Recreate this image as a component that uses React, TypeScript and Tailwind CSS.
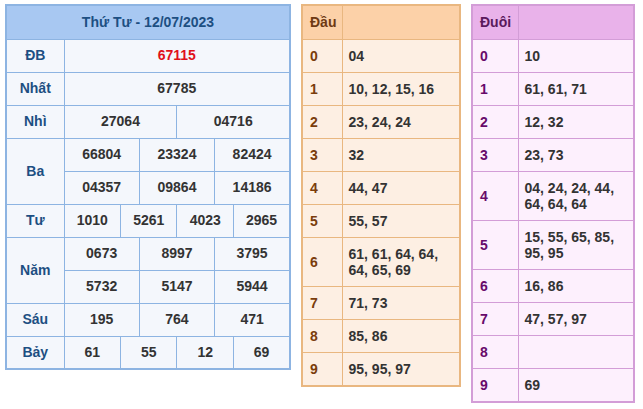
import React from "react";

const font = { fontFamily: '"Liberation Sans", Arial, sans-serif' };

function LeftTable() {
  const td = "border border-[#8db4e2] text-center text-[#333] px-1";
  const lb = "border border-[#8db4e2] text-center text-[#1d4f82]";
  const rows: { label: string; groups: string[][]; red?: boolean }[] = [
    { label: "ĐB", groups: [["67115"]], red: true },
    { label: "Nhất", groups: [["67785"]] },
    { label: "Nhì", groups: [["27064", "04716"]] },
    { label: "Ba", groups: [["66804", "23324", "82424"], ["04357", "09864", "14186"]] },
    { label: "Tư", groups: [["1010", "5261", "4023", "2965"]] },
    { label: "Năm", groups: [["0673", "8997", "3795"], ["5732", "5147", "5944"]] },
    { label: "Sáu", groups: [["195", "764", "471"]] },
    { label: "Bảy", groups: [["61", "55", "12", "69"]] },
  ];
  return (
    <table className="table-fixed border-collapse w-[286px] border-2 border-[#8db4e2] bg-[#f4f7fc] text-[14px] font-bold">
      <colgroup>
        <col className="w-[58px]" />
        {Array.from({ length: 12 }).map((_, i) => (
          <col key={i} />
        ))}
      </colgroup>
      <tbody>
        <tr className="h-[34px] bg-[#a8c8f2]">
          <td colSpan={13} className="border border-[#8db4e2] text-center text-[#1d4f82]">
            Thứ Tư - 12/07/2023
          </td>
        </tr>
        {rows.map((r) =>
          r.groups.map((g, gi) => (
            <tr key={r.label + gi} className="h-[33px]">
              {gi === 0 && (
                <td rowSpan={r.groups.length} className={lb}>
                  {r.label}
                </td>
              )}
              {g.map((v, vi) => (
                <td
                  key={vi}
                  colSpan={12 / g.length}
                  className={td + (r.red ? " !text-[#e0101a]" : "")}
                >
                  {v}
                </td>
              ))}
            </tr>
          ))
        )}
      </tbody>
    </table>
  );
}

type SideProps = {
  title: string;
  width: string;
  labelW: string;
  headBg: string;
  cellBg: string;
  border: string;
  labelColor: string;
  titleColor: string;
  data: string[];
};

function SideTable(p: SideProps) {
  return (
    <table className={`table-fixed border-collapse border-2 text-[14px] font-bold leading-[16px] ${p.width} ${p.border} ${p.cellBg}`}>
      <colgroup>
        <col className={p.labelW} />
        <col />
      </colgroup>
      <tbody>
        <tr className={`h-[34px] ${p.headBg}`}>
          <td className={`border ${p.border} pl-[7px] ${p.titleColor}`}>{p.title}</td>
          <td className={`border ${p.border}`}></td>
        </tr>
        {p.data.map((d, i) => (
          <tr key={i} className="h-[33px]">
            <td className={`border ${p.border} pl-[7px] ${p.labelColor}`}>{i}</td>
            <td className={`border ${p.border} pl-[6px] pr-1 py-[8px] text-[#333]`}>{d}</td>
          </tr>
        ))}
      </tbody>
    </table>
  );
}

export default function App() {
  return (
    <div className="bg-white w-[643px] h-[409px] pt-[4px] pl-[5px]" style={font}>
      <div className="flex items-start gap-[10px]">
        <LeftTable />
        <SideTable
          title="Đầu"
          width="w-[160px]"
          labelW="w-[40px]"
          headBg="bg-[#fcd1a8]"
          cellBg="bg-[#fdefe3]"
          border="border-[#e9b780]"
          labelColor="text-[#7a3d0c]"
          titleColor="text-[#6e3a14]"
          data={[
            "04",
            "10, 12, 15, 16",
            "23, 24, 24",
            "32",
            "44, 47",
            "55, 57",
            "61, 61, 64, 64, 64, 65, 69",
            "71, 73",
            "85, 86",
            "95, 95, 97",
          ]}
        />
        <SideTable
          title="Đuôi"
          width="w-[164px]"
          labelW="w-[46px]"
          headBg="bg-[#e9b2ea]"
          cellBg="bg-[#fdf0fd]"
          border="border-[#d39dd7]"
          labelColor="text-[#680a6a]"
          titleColor="text-[#5a1a5c]"
          data={[
            "10",
            "61, 61, 71",
            "12, 32",
            "23, 73",
            "04, 24, 24, 44, 64, 64, 64",
            "15, 55, 65, 85, 95, 95",
            "16, 86",
            "47, 57, 97",
            "",
            "69",
          ]}
        />
      </div>
    </div>
  );
}
